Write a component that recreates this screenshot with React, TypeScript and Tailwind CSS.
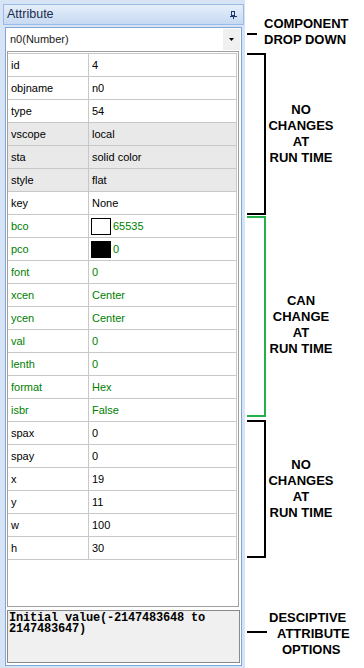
import React from "react";

type Row = { k: string; v: string; tone: "n" | "g" | "green"; swatch?: "white" | "black" };

const rows: Row[] = [
  { k: "id", v: "4", tone: "n" },
  { k: "objname", v: "n0", tone: "n" },
  { k: "type", v: "54", tone: "n" },
  { k: "vscope", v: "local", tone: "g" },
  { k: "sta", v: "solid color", tone: "g" },
  { k: "style", v: "flat", tone: "g" },
  { k: "key", v: "None", tone: "n" },
  { k: "bco", v: "65535", tone: "green", swatch: "white" },
  { k: "pco", v: "0", tone: "green", swatch: "black" },
  { k: "font", v: "0", tone: "green" },
  { k: "xcen", v: "Center", tone: "green" },
  { k: "ycen", v: "Center", tone: "green" },
  { k: "val", v: "0", tone: "green" },
  { k: "lenth", v: "0", tone: "green" },
  { k: "format", v: "Hex", tone: "green" },
  { k: "isbr", v: "False", tone: "green" },
  { k: "spax", v: "0", tone: "n" },
  { k: "spay", v: "0", tone: "n" },
  { k: "x", v: "19", tone: "n" },
  { k: "y", v: "11", tone: "n" },
  { k: "w", v: "100", tone: "n" },
  { k: "h", v: "30", tone: "n" },
];

function PinIcon() {
  return (
    <svg width="7" height="8" viewBox="0 0 7 8" className="block">
      <rect x="1.5" y="0.5" width="3" height="4" fill="none" stroke="#1b3a6b" strokeWidth="1" />
      <rect x="4" y="0" width="1" height="5" fill="#1b3a6b" />
      <rect x="0" y="5" width="7" height="1" fill="#1b3a6b" />
      <rect x="3" y="6" width="1" height="2" fill="#1b3a6b" />
    </svg>
  );
}

function LeftPanel() {
  return (
    <div className="w-[245px] h-full bg-[#d6e4f6] pt-[4px] pl-[3px] pr-[1px] pb-[2px] flex flex-col">
      <div className="h-[21px] border border-[#99bbe8] bg-gradient-to-b from-[#e6effb] to-[#c7d9f2] flex items-center justify-between pl-[3px] pr-[6px]">
        <span className="text-[12.5px] text-[#1a2d4d] leading-none">Attribute</span>
        <PinIcon />
      </div>
      <div className="mt-[2px] mx-[2px] flex-1 border border-[#7ea6d8] bg-white flex flex-col">
        <div className="h-[23px] flex items-center justify-between pl-[4px] pr-[1px]">
          <span className="text-[11px] text-[#1a1a1a]">n0(Number)</span>
          <div className="w-[17px] h-[21px] bg-[#f0f0f0] flex items-center justify-center">
            <svg width="5" height="3" viewBox="0 0 5 3" className="block">
              <path d="M0 0h5l-2.5 3z" fill="#000" />
            </svg>
          </div>
        </div>
        <div className="ml-[1px] w-[232px] h-[556px] border border-[#a0a0a0] pt-[1px] pr-[1px]">
          <div className="border-t border-r border-[#c8c8c8]">
            {rows.map((r) => {
              const bg = r.tone === "g" ? "bg-[#e9e9e9]" : "bg-white";
              const color = r.tone === "green" ? "text-[#008000]" : "text-[#000000]";
              return (
                <div key={r.k} className={`h-[23px] flex border-b border-[#c8c8c8] text-[11px] ${bg} ${color}`}>
                  <div className="w-[81px] border-r border-[#c8c8c8] pl-[3px] flex items-center">{r.k}</div>
                  <div className="flex-1 pl-[2px] flex items-center">
                    {r.swatch === "white" && (
                      <span className="w-[20px] h-[17px] border border-black bg-white mr-[2px]" />
                    )}
                    {r.swatch === "black" && (
                      <span className="w-[20px] h-[17px] border border-black bg-black mr-[2px]" />
                    )}
                    <span className={r.swatch ? "" : "pl-[1px]"}>{r.v}</span>
                  </div>
                </div>
              );
            })}
          </div>
        </div>
        <div className="mt-[3px] ml-[1px] w-[233px] h-[53px] border border-[#8a8a8a] bg-[#f0f0f0] pt-[2px] pl-[1px] font-['Liberation_Mono',monospace] font-bold text-[12px] tracking-[-0.2px] leading-[11px] text-black">
          Initial value(-2147483648 to 2147483647)
        </div>
      </div>
    </div>
  );
}

function Bracket({ color, h, mt, lines, shift }: { color: string; h: string; mt: string; lines: string[]; shift?: string }) {
  return (
    <div className={`flex ${h} ${mt}`}>
      <div className={`ml-[2px] w-[19px] border-y-2 border-r-2 ${color}`} />
      <div className={`w-[70px] flex flex-col items-center justify-center text-center ${shift ?? ""}`}>
        {lines.map((l) => (
          <div key={l} className="leading-[16px] whitespace-nowrap">{l}</div>
        ))}
      </div>
    </div>
  );
}

function RightAnnotations() {
  return (
    <div className="flex-1 h-full flex flex-col font-bold text-[13px] text-black">
      <div className="h-[53px] flex pt-[16px]">
        <div className="w-[19px] pl-[2px]">
          <div className="mt-[17px] w-[10px] h-[2px] bg-black" />
        </div>
        <div className="leading-[16px]">
          <div>COMPONENT</div>
          <div>DROP DOWN</div>
        </div>
      </div>
      <Bracket color="border-black" h="h-[162px]" mt="mt-0" lines={["NO", "CHANGES", "AT", "RUN TIME"]} />
      <Bracket color="border-[#22b14c]" h="h-[201px]" mt="mt-[1px]" lines={["CAN", "CHANGE", "AT", "RUN TIME"]} shift="pt-[16px]" />
      <Bracket color="border-black" h="h-[138px]" mt="mt-[3px]" lines={["NO", "CHANGES", "AT", "RUN TIME"]} />
      <div className="mt-[52px] flex">
        <div className="w-[24px] pl-[2px]">
          <div className="mt-[21px] w-[20px] h-[2px] bg-black" />
        </div>
        <div className="leading-[16px] whitespace-nowrap">
          <div>DESCIPTIVE</div>
          <div className="pl-[8px]">ATTRIBUTE</div>
          <div className="pl-[13px]">OPTIONS</div>
        </div>
      </div>
    </div>
  );
}

export default function App() {
  return (
    <div className="w-[364px] h-[668px] flex bg-white overflow-hidden font-['Liberation_Sans',Arial,sans-serif]">
      <LeftPanel />
      <RightAnnotations />
    </div>
  );
}
